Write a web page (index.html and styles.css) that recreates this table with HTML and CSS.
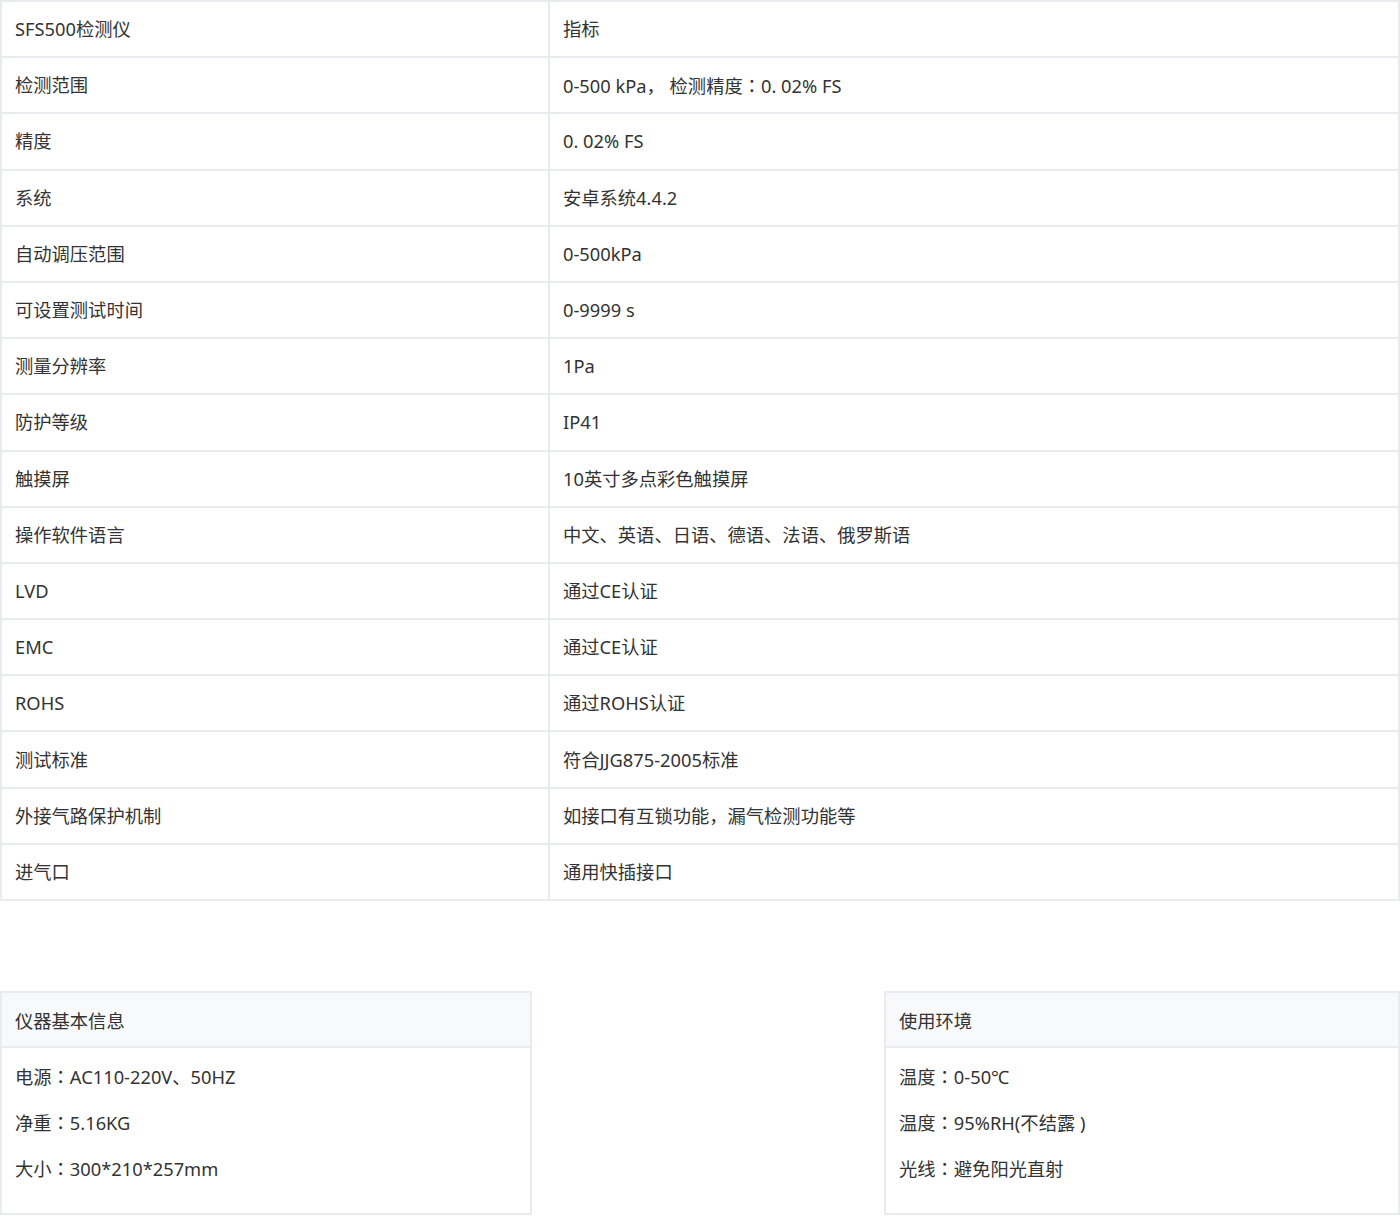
FILE: index.html
```html
<!DOCTYPE html>
<html lang="zh-CN">
<head>
<meta charset="utf-8">
<title>SFS500检测仪</title>
<link rel="stylesheet" href="styles.css">
</head>
<body>
<table class="spec">
  <tr><td class="k">SFS500检测仪</td><td>指标</td></tr>
  <tr><td class="k">检测范围</td><td>0-500 kPa， 检测精度<span class="colon" lang="zh-TW">：</span>0. 02% FS</td></tr>
  <tr><td class="k">精度</td><td>0. 02% FS</td></tr>
  <tr><td class="k">系统</td><td>安卓系统4.4.2</td></tr>
  <tr><td class="k">自动调压范围</td><td>0-500kPa</td></tr>
  <tr><td class="k">可设置测试时间</td><td>0-9999 s</td></tr>
  <tr><td class="k">测量分辨率</td><td>1Pa</td></tr>
  <tr><td class="k">防护等级</td><td>IP41</td></tr>
  <tr><td class="k">触摸屏</td><td>10英寸多点彩色触摸屏</td></tr>
  <tr><td class="k">操作软件语言</td><td>中文、英语、日语、德语、法语、俄罗斯语</td></tr>
  <tr><td class="k">LVD</td><td>通过CE认证</td></tr>
  <tr><td class="k">EMC</td><td>通过CE认证</td></tr>
  <tr><td class="k">ROHS</td><td>通过ROHS认证</td></tr>
  <tr><td class="k">测试标准</td><td>符合JJG875-2005标准</td></tr>
  <tr><td class="k">外接气路保护机制</td><td>如接口有互锁功能，漏气检测功能等</td></tr>
  <tr><td class="k">进气口</td><td>通用快插接口</td></tr>
</table>

<div class="cards">
  <section class="card">
    <div class="card-head">仪器基本信息</div>
    <div class="card-body">
      <p>电源<span class="colon" lang="zh-TW">：</span>AC110-220V、50HZ</p>
      <p>净重<span class="colon" lang="zh-TW">：</span>5.16KG</p>
      <p>大小<span class="colon" lang="zh-TW">：</span>300*210*257mm</p>
    </div>
  </section>
  <div class="spacer"></div>
  <section class="card">
    <div class="card-head">使用环境</div>
    <div class="card-body">
      <p>温度<span class="colon" lang="zh-TW">：</span>0-50℃</p>
      <p>温度<span class="colon" lang="zh-TW">：</span>95%RH(不结露 )</p>
      <p>光线<span class="colon" lang="zh-TW">：</span>避免阳光直射</p>
    </div>
  </section>
</div>
</body>
</html>
```

FILE: styles.css
```css
html, body {
  margin: 0;
  padding: 0;
  background: #fff;
}
body {
  font-family: "Noto Sans", "Noto Sans CJK SC", sans-serif;
  font-size: 18.3px;
  color: #333;
  width: 1400px;
}
.colon {
  font-family: "Noto Sans CJK TC", sans-serif;
}
.spec {
  width: 1400px;
  border-collapse: collapse;
  table-layout: fixed;
}
.spec td {
  border: 2px solid #e9ebee;
  height: 54.2px;
  padding: 0 0 0 13px;
  line-height: 24px;
  vertical-align: middle;
}
.spec td.k {
  width: 533px;
}
.cards {
  display: grid;
  grid-template-columns: 532px 1fr 516px;
  margin-top: 90px;
}
.card {
  border: 2px solid #e9ebee;
  height: 224px;
  box-sizing: border-box;
}
.card-head {
  background: #f8f9fa;
  height: 53px;
  border-bottom: 2px solid #e9ebee;
  padding-left: 13px;
  display: flex;
  align-items: center;
}
.card-body {
  padding: 16px 13px 0;
}
.card-body p {
  margin: 0;
  height: 46px;
  line-height: 24px;
}
```
